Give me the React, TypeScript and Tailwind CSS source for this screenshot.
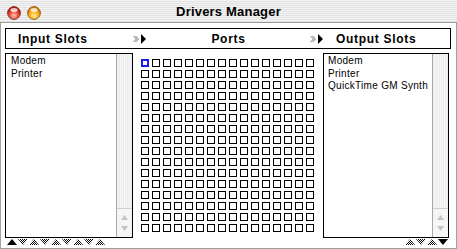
import React from "react";

const inputs = ["Modem", "Printer"];
const outputs = ["Modem", "Printer", "QuickTime GM Synth"];

function Light({ id, hi, mid, lo, edge }: { id: string; hi: string; mid: string; lo: string; edge: string }) {
  return (
    <svg width="14" height="14" viewBox="0 0 14 14">
      <defs>
        <radialGradient id={id} cx="50%" cy="70%" r="60%">
          <stop offset="0%" stopColor={hi} />
          <stop offset="55%" stopColor={mid} />
          <stop offset="100%" stopColor={lo} />
        </radialGradient>
      </defs>
      <circle cx="7" cy="7" r="6.4" fill={`url(#${id})`} stroke={edge} strokeWidth="0.9" />
      <ellipse cx="7" cy="4" rx="3.6" ry="2.1" fill="#fff" opacity="0.75" />
    </svg>
  );
}

function Tri({ up, solid, id }: { up: boolean; solid: boolean; id: string }) {
  const pts = up ? "0,6 5,0 10,6" : "0,0 10,0 5,6";
  return (
    <svg width="11" height="6" viewBox="0 0 11 6" className="block">
      <defs>
        <pattern id={id} width="2" height="2" patternUnits="userSpaceOnUse">
          <rect width="1" height="1" fill="#000" />
          <rect x="1" y="1" width="1" height="1" fill="#000" />
        </pattern>
      </defs>
      <polygon points={pts} fill={solid ? "#000" : `url(#${id})`} />
    </svg>
  );
}

function HeadArrows() {
  return (
    <svg width="14" height="10" viewBox="0 0 14 10" className="block">
      <polygon points="0,2 3,5 0,8 1,8 4,5 1,2" fill="#777" />
      <polygon points="2,2 5,5 2,8 3,8 6,5 3,2" fill="#777" />
      <polygon points="8,0 13,5 8,10" fill="#000" />
    </svg>
  );
}

function ScrollBar() {
  return (
    <div className="w-[16px] flex flex-col border-l border-[#a8a8a8] bg-[repeating-linear-gradient(to_right,#ececec_0px,#ececec_1px,#f6f6f6_1px,#f6f6f6_2px)]">
      <div className="flex-1" />
      <div className="h-[29px] border-t border-[#cfcfcf] bg-[#f5f5f5] flex flex-col items-center justify-around py-[3px]">
        <svg width="7" height="5" viewBox="0 0 7 5"><polygon points="0,5 3.5,0 7,5" fill="#c4c4c4" /></svg>
        <svg width="7" height="5" viewBox="0 0 7 5"><polygon points="0,0 7,0 3.5,5" fill="#c4c4c4" /></svg>
      </div>
    </div>
  );
}

function List({ items, width, pl }: { items: string[]; width: string; pl: string }) {
  return (
    <div className={`${width} h-[185px] border border-black bg-white flex`}>
      <div className={`flex-1 ${pl} pt-[1px] text-[10px] leading-[12.5px] tracking-[0.3px] text-black`}>
        {items.map((t) => (
          <div key={t}>{t}</div>
        ))}
      </div>
      <ScrollBar />
    </div>
  );
}

export default function App() {
  const cells = Array.from({ length: 256 }, (_, i) => i);
  return (
    <div className="w-[457px] h-[249px] flex flex-col bg-white overflow-hidden font-['Liberation_Sans',Arial,sans-serif]">
      <div className="h-[23px] relative flex items-center justify-center border-b border-[#9a9a9a] bg-[repeating-linear-gradient(to_bottom,#f3f3f3_0px,#f3f3f3_1px,#e2e2e2_1px,#e2e2e2_2px)]">
        <div className="absolute left-[7px] top-[6px] flex gap-[6px]">
          <Light id="red" hi="#ffc8b8" mid="#e8503c" lo="#b01808" edge="#7a2a20" />
          <Light id="orange" hi="#fff0a0" mid="#ffb020" lo="#d07000" edge="#8a5a10" />
        </div>
        <span className="text-[13px] font-bold text-black pt-[2px] tracking-[0.2px]">Drivers Manager</span>
      </div>

      <div className="flex-1 flex flex-col border-x border-b border-[#a0a0a0]">
        <div className="mt-[5px] ml-[4px] w-[446px] h-[21px] border border-black bg-white flex items-center text-[12px] font-bold tracking-[0.7px] text-black">
          <span className="pl-[12px] w-[127px]">Input Slots</span>
          <HeadArrows />
          <span className="w-[163px] text-center">Ports</span>
          <HeadArrows />
          <span className="pl-[12px]">Output Slots</span>
        </div>

        <div className="mt-[4px] flex">
          <div className="ml-[4px]">
            <List items={inputs} width="w-[128px]" pl="pl-[5px]" />
          </div>
          <div className="w-[190px] pl-[8px] pt-[6px]">
            <div className="grid grid-cols-[repeat(16,8px)] gap-[3px]">
              {cells.map((i) => (
                <div
                  key={i}
                  className={i === 0 ? "w-[8px] h-[8px] border-2 border-[#1c1cf0]" : "w-[8px] h-[8px] border border-black"}
                />
              ))}
            </div>
          </div>
          <List items={outputs} width="w-[126px]" pl="pl-[4px]" />
        </div>

        <div className="mt-[1px] flex justify-between pl-[6px] pr-[7px]">
          <div className="flex">
            {[0, 1, 2, 3, 4, 5, 6, 7, 8].map((i) => (
              <Tri key={i} id={`l${i}`} up={i % 2 === 0} solid={i === 0} />
            ))}
          </div>
          <div className="flex">
            {[0, 1, 2, 3].map((i) => (
              <Tri key={i} id={`r${i}`} up={i % 2 === 0} solid={i === 3} />
            ))}
          </div>
        </div>
      </div>
    </div>
  );
}
